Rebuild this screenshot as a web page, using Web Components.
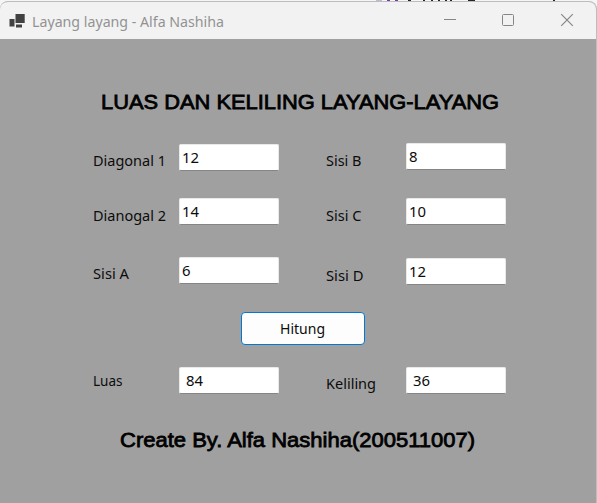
<!DOCTYPE html>
<html lang="id">
<head>
<meta charset="utf-8">
<title>Layang layang - Alfa Nashiha</title>
<style>
html,body{margin:0;width:597px;height:503px;overflow:hidden;background:#f5f5f5;font-family:"Noto Sans","Open Sans",sans-serif}
</style>
</head>
<body>
<app-window>
  <title-bar slot="title">Layang layang - Alfa Nashiha</title-bar>
  <form-heading style="padding:51px 0 0 101px;margin-bottom:-1px" fit="398">LUAS DAN KELILING LAYANG-LAYANG</form-heading>
  <field-columns style="height:199px">
    <field-column slot="left">
      <form-field style="margin-top:31px" drop="3" label="Diagonal 1" fit="73" value="12" vfit="17"></form-field>
      <form-field style="margin-top:27px" drop="4" label="Dianogal 2" fit="73" value="14" vfit="17"></form-field>
      <form-field style="margin-top:32px" drop="3" label="Sisi A" fit="36" value="6" vfit="8.5"></form-field>
    </field-column>
    <field-column slot="right">
      <form-field style="margin-top:30px" drop="4" label="Sisi B" fit="35.5" value="8" vfit="8.5"></form-field>
      <form-field style="margin-top:28px" drop="4" label="Sisi C" fit="35.5" value="10" vfit="17"></form-field>
      <form-field style="margin-top:33px" drop="4" label="Sisi D" fit="37.5" value="12" vfit="17"></form-field>
    </field-column>
  </field-columns>
  <push-button>Hitung</push-button>
  <field-columns style="height:70px">
    <field-column slot="left">
      <form-field style="margin-top:22px" drop="0" label="Luas" fit="29.5" value="84" vfit="17" inset="7"></form-field>
    </field-column>
    <field-column slot="right">
      <form-field style="margin-top:22px" drop="3" label="Keliling" fit="50" value="36" vfit="17" inset="7"></form-field>
    </field-column>
  </field-columns>
  <form-heading style="padding:13px 0 0 120px" fit="355">Create By. Alfa Nashiha(200511007)</form-heading>
</app-window>
<script>
function define(name, html, setup) {
  const t = document.createElement('template');
  t.innerHTML = html;
  customElements.define(name, class extends HTMLElement {
    constructor() {
      super();
      this.attachShadow({mode: 'open'}).append(t.content.cloneNode(true));
    }
    connectedCallback() { if (setup) setup(this, this.shadowRoot); }
  });
}

// A run of text condensed or widened to the width given in "w".
define('fit-text', `<style>
:host{display:inline-block;white-space:pre}
span{display:inline-block;transform-origin:0 50%}
</style><span><slot></slot></span>`, (el, root) => {
  const s = root.querySelector('span');
  const natural = s.offsetWidth ? s.getBoundingClientRect().width : 0;
  const w = parseFloat(el.getAttribute('w'));
  if (natural && w) {
    s.style.transform = 'scaleX(' + w / natural + ')';
    el.style.width = w + 'px';
  }
});

define('app-window', `<style>
:host{display:flex;flex-direction:column;width:597px;height:503px;position:relative}
.behind{position:absolute;left:0;top:0}
.frame{position:relative;box-sizing:border-box;margin-top:1px;width:597px;height:506px;border:1px solid #bdbdbd;border-left:0;border-radius:8px 8px 0 0;overflow:hidden;background:#a0a0a0;flex:none}
</style>
<svg class="behind" width="597" height="4" viewBox="0 0 597 4" shape-rendering="crispEdges">
<path d="M376 0h6v1h-6z" fill="#b9bfd0"/><path d="M387 0h3v1h-3zM395 0h3v1h-3z" fill="#7440a8"/>
<path d="M408 0h3v1h-3zM423 0h2v1h-2zM431 0h2v1h-2zM438 0h2v1h-2zM445 0h2v1h-2zM450 0h2v1h-2zM468 0h7v1h-7zM553 0h2v1h-2z" fill="#252525"/>
</svg>
<div class="frame"><slot name="title"></slot><slot></slot></div>`);

define('title-bar', `<style>
:host{display:flex;align-items:center;height:37px;background:#f2f2f2;color:#929292;font-size:15px;line-height:20px;box-sizing:border-box}
.icon{margin-left:9px;flex:none}
.title{margin-left:7px;flex:1}
.controls{flex:none}
</style>
<svg class="icon" width="16" height="16" viewBox="0 0 16 16" fill="#414141"><path d="M6.5 1H15.7V10H6.5zM.5 6H5.5V13.5H.5zM7 11.4H13V14.5H7z"/></svg>
<div class="title"><fit-text w="192"><slot></slot></fit-text></div>
<svg class="controls" width="153" height="37" viewBox="443 2 153 37" fill="none" stroke="#868686">
<path d="M444 19.5H456"/><rect x="502.5" y="14.5" width="11" height="11" rx="1"/><path d="M561.2 14.2L572.8 25.8M572.8 14.2L561.2 25.8" stroke-width="1.2"/>
</svg>`);

define('form-heading', `<style>
:host{display:block;color:#000;font:21px/24px "Liberation Sans",Arial,sans-serif;-webkit-text-stroke:.8px #000}
</style><fit-text><slot></slot></fit-text>`, (el, root) => {
  const f = document.createElement('fit-text');
  f.setAttribute('w', el.getAttribute('fit'));
  f.append(document.createElement('slot'));
  root.querySelector('fit-text').replaceWith(f);
});

define('field-columns', `<style>
:host{display:grid;grid-template-columns:233px 1fr;padding-left:93px;align-items:start}
</style><slot name="left"></slot><slot name="right"></slot>`);

define('field-column', `<style>:host{display:flex;flex-direction:column}</style><slot></slot>`);

define('form-field', `<style>
:host{display:grid;align-items:start;height:27px;font-size:15.3px;line-height:27px;color:#0c0c0c}
.label{height:27px}
.box{box-sizing:border-box;width:100px;height:27px;background:#fff;border:1px solid #e9e9e9;border-bottom-color:#858585;border-radius:2px;line-height:25px}
</style><div class="label"></div><div class="box"></div>`, (el, root) => {
  const a = n => el.getAttribute(n);
  const label = root.querySelector('.label'), box = root.querySelector('.box');
  el.style.gridTemplateColumns = (el.parentElement.slot === 'left' ? 86 : 80) + 'px 100px';
  label.style.paddingTop = a('drop') + 'px';
  box.style.paddingLeft = (a('inset') || 3) - 1 + 'px';
  for (const [host, text, w] of [[label, a('label'), a('fit')], [box, a('value'), a('vfit')]]) {
    const f = document.createElement('fit-text');
    f.textContent = text;
    f.setAttribute('w', w);
    host.append(f);
  }
});

define('push-button', `<style>
:host{display:flex;justify-content:center;align-items:center;box-sizing:border-box;width:124px;height:33px;margin-left:241px;padding-right:1px;background:#fdfdfd;border:1px solid #0078d4;border-radius:4px;font-size:15.3px;line-height:27px;color:#0c0c0c}
</style><fit-text w="45"><slot></slot></fit-text>`);
</script>
</body>
</html>
